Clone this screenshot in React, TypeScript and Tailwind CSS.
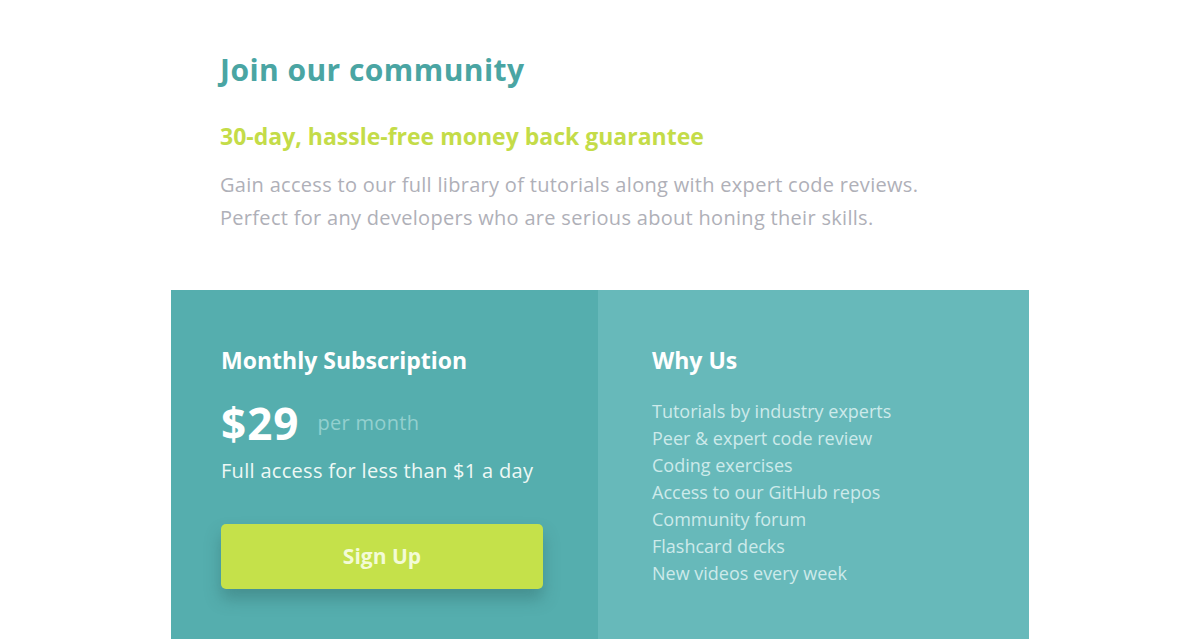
import React from "react";

const items = [
  "Tutorials by industry experts",
  "Peer & expert code review",
  "Coding exercises",
  "Access to our GitHub repos",
  "Community forum",
  "Flashcard decks",
  "New videos every week",
];

export default function App() {
  return (
    <div className="min-h-[639px] w-full bg-white overflow-hidden" style={{ fontFamily: '"Open Sans", "Noto Sans", sans-serif' }}>
      <div className="mx-auto w-[858px] pt-[50px]">
        <div className="px-[49px] pb-[56px]">
          <h1 className="text-[30px] leading-[40px] font-bold text-[#4aa5a3] tracking-[0.45px]">Join our community</h1>
          <h2 className="mt-[31px] text-[23px] leading-[30px] font-bold text-[#c4dc48]">30-day, hassle-free money back guarantee</h2>
          <p className="mt-[17px] text-[20px] leading-[33px] text-[#afb0b8] tracking-[0.3px]">
            Gain access to our full library of tutorials along with expert code reviews.
            <br />
            Perfect for any developers who are serious about honing their skills.
          </p>
        </div>
        <div className="grid grid-cols-[427px_431px] h-[360px]">
          <div className="bg-[#55aeae] pl-[50px] pr-[55px] pt-[55px]">
            <h3 className="text-[23px] leading-[30px] font-bold text-white">Monthly Subscription</h3>
            <div className="mt-[23px] flex items-center gap-[18px]">
              <span className="text-[44px] leading-[50px] font-bold text-white tracking-[1px]">$29</span>
              <span className="text-[20px] text-[#93d0cf] tracking-[0.3px]">per month</span>
            </div>
            <p className="mt-[9px] text-[20px] leading-[28px] text-[#eef8f5] tracking-[0.3px]">Full access for less than $1 a day</p>
            <button className="mt-[39px] w-[322px] h-[65px] rounded-[5px] bg-[#c5e14a] text-[21px] font-bold text-[#f3fbd6] shadow-[0_10px_16px_rgba(40,90,90,0.35)]">
              Sign Up
            </button>
          </div>
          <div className="bg-[#67b9ba] pl-[54px] pt-[55px]">
            <h3 className="text-[23px] leading-[30px] font-bold text-white">Why Us</h3>
            <ul className="mt-[23px]">
              {items.map((t) => (
                <li key={t} className="text-[18px] leading-[27px] text-[#cdeaea]">{t}</li>
              ))}
            </ul>
          </div>
        </div>
      </div>
    </div>
  );
}
